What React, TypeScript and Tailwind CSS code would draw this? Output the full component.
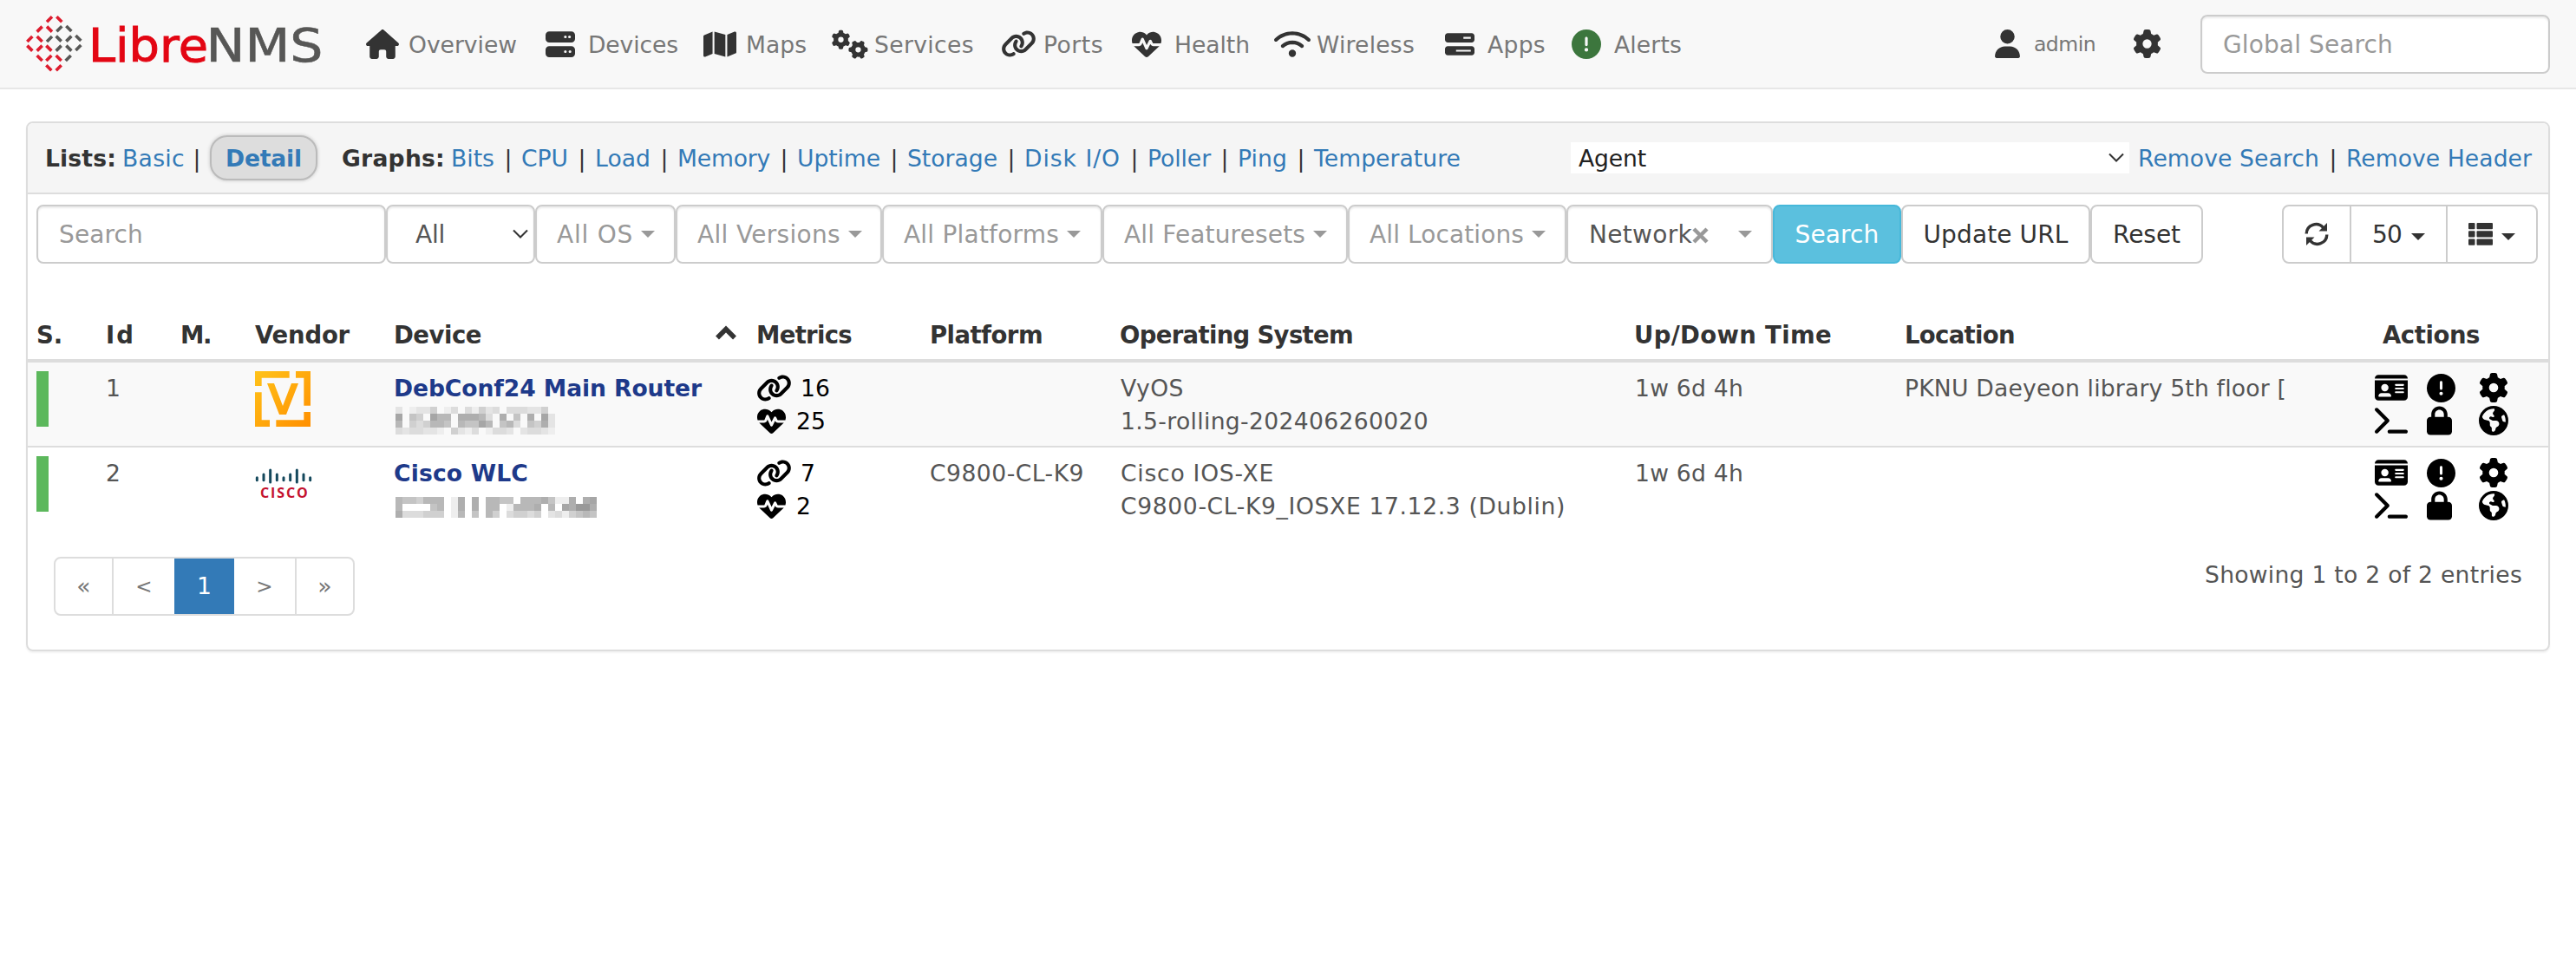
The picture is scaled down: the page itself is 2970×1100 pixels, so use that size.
import React, { useLayoutEffect, useRef } from "react";
import { FaHouse, FaServer, FaMap, FaGears, FaLink, FaHeartPulse, FaWifi, FaBarsProgress, FaCircleExclamation, FaUser, FaGear, FaIdCard, FaTerminal, FaLock, FaEarthAmericas } from "react-icons/fa6";

/* Text whose tracking is adjusted so that it spans a given width. */
function T({ w, className = "", children }: { w: number; className?: string; children: string }) {
  const ref = useRef<HTMLSpanElement>(null);
  useLayoutEffect(() => {
    const el = ref.current!;
    el.style.letterSpacing = "0px";
    const natural = el.getBoundingClientRect().width;
    el.style.letterSpacing = `${(w - natural) / children.length}px`;
  }, [w, children]);
  return <span ref={ref} className={"inline-block w-max justify-self-start whitespace-pre pt-[2px] " + className}>{children}</span>;
}

const DASHES: [number, number, number, string][] = [
  [111, 36, 1, "r"], [145, 36, 0, "r"],
  [77, 70, 1, "r"], [111, 70, 0, "r"], [145, 69, 1, "g"], [178, 68, 0, "g"],
  [43, 104, 1, "r"], [77, 104, 0, "r"], [111, 104, 1, "g"], [143, 103, 0, "g"], [178, 103, 1, "g"], [211, 101, 0, "g"],
  [43, 136, 0, "r"], [77, 136, 1, "r"], [109, 136, 0, "r"], [143, 136, 1, "g"], [178, 136, 0, "g"], [211, 134, 1, "g"],
  [77, 170, 0, "r"], [109, 170, 1, "r"], [143, 170, 0, "r"], [176, 170, 1, "g"],
  [109, 204, 0, "r"], [143, 204, 1, "r"],
];

function Logo() {
  return (
    <svg width="350" height="80" viewBox="0 0 350 80" className="block">
      {DASHES.map(([x, y, up, c], i) => {
        const cx = x / 3 - 10, cy = y / 3 - 0.7, d = 3, s = up ? 1 : -1;
        return <line key={i} x1={cx - d} y1={cy + d * s} x2={cx + d} y2={cy - d * s} stroke={c === "r" ? "#dd1c2e" : "#575756"} strokeWidth="3.6" />;
      })}
      <text x="72" y="59.5" fontFamily="DejaVu Sans" fontSize="53" fill="#e30613" stroke="#e30613" strokeWidth="0.9" textLength="138" lengthAdjust="spacingAndGlyphs">Libre</text>
      <text x="207.500" y="59.5" fontFamily="DejaVu Sans" fontSize="53" fill="#575756" stroke="#575756" strokeWidth="0.6" textLength="135" lengthAdjust="spacingAndGlyphs">NMS</text>
    </svg>
  );
}

function Caret({ className = "" }: { className?: string }) {
  return <span className={"inline-block border-x-8 border-t-8 border-x-transparent " + className} />;
}

const Chevron = () => (
  <svg width="18" height="12" viewBox="0 0 18 12" fill="none" stroke="#333" strokeWidth="2"><path d="M1 1.5l8 8 8-8" /></svg>
);

function NavItem({ icon, left, tw, children }: { icon: React.ReactNode; left: string; tw: number; children: string }) {
  return (
    <div className={"flex h-full shrink-0 items-center " + left}>
      <span className="flex w-[49px] shrink-0 text-[#333]">{icon}</span>
      <T w={tw} className="text-[#777]">{children}</T>
    </div>
  );
}

const Bar = ({ className = "ml-[11px]" }: { className?: string }) => <span className={"mr-[10px] w-[10px] pt-[2px] text-center " + className}>|</span>;

const BOX = "flex h-[68px] shrink-0 items-center rounded-lg border-2 border-[#ccc] bg-white ";
const INSET = "shadow-[inset_0_2px_2px_rgba(0,0,0,0.075)] ";

const GRAPHS: [string, number][] = [["Bits", 50], ["CPU", 54], ["Load", 64], ["Memory", 107], ["Uptime", 96], ["Storage", 104], ["Disk I/O", 111], ["Poller", 73], ["Ping", 57], ["Temperature", 169]];

const FILTERS: [string, string, number][] = [
  ["All OS", "w-[162px]", 88], ["All Versions", "w-[238px]", 165], ["All Platforms", "w-[254px]", 179], ["All Featuresets", "w-[283px]", 209], ["All Locations", "w-[252px]", 178],
];

const COLS = "grid grid-cols-[80px_86px_86px_160px_417px_200px_220px_593px_312px_542px_200px] pl-[10px] ";

function Refresh() {
  return (
    <svg width="28" height="28" viewBox="0 0 28 28" fill="none" stroke="#333" strokeWidth="3.4">
      <path d="M2.2 13.500A11 11 0 0 1 21.500 6.500" /><path d="M25.800 14.500A11 11 0 0 1 6.500 21.500" />
      <path d="M26 1v9.500H16.500z" fill="#333" stroke="none" /><path d="M2 27V17.500h9.500z" fill="#333" stroke="none" />
    </svg>
  );
}

function ListIcon() {
  return (
    <svg width="28" height="26" viewBox="0 0 28 26" fill="#333">
      {[0, 9.3, 18.6].map((y) => <g key={y}><rect x="0" y={y} width="7.5" height="7.2" rx="1" /><rect x="9.5" y={y} width="18.5" height="7.2" rx="1" /></g>)}
    </svg>
  );
}

function Vyos() {
  return (
    <svg width="64" height="64" viewBox="0 0 192 192" className="block">
      <defs><linearGradient id="vy" x1="0" y1="0" x2="1" y2="1"><stop offset="0" stopColor="#ffc31a" /><stop offset="1" stopColor="#ff8f00" /></linearGradient></defs>
      <path fill="url(#vy)" d="M0 0H119V23H23V51H0ZM141 0H192V119H169V23H141ZM0 73H23V169H51V192H0ZM169 141H192V192H73V169H169ZM42 42H66L96 120L126 42H150L108 150H84Z" />
    </svg>
  );
}

function Cisco() {
  const bars: [number, number, number][] = [[4, 28, 43], [27, 17, 43], [50, 2, 50], [73, 17, 43], [96, 28, 43], [119, 17, 43], [142, 2, 50], [165, 17, 43], [188, 28, 43]];
  return (
    <svg width="66" height="48" viewBox="-3 0 198 144" className="block overflow-visible">
      {bars.map(([x, a, b]) => <line key={x} x1={x} x2={x} y1={a + 4} y2={b - 2} stroke="#15495d" strokeWidth="9" strokeLinecap="round" />)}
      <text x="15" y="102" fontFamily="Open Sans" fontWeight="700" fontSize="48" fill="#c4122f" textLength="164" lengthAdjust="spacing">CISCO</text>
    </svg>
  );
}

/* Shades of the pixelated addresses: 0 is blank, 9 the darkest. */
const MASK_A = ["20122401303142303332240", "80540866077763070507082", "60434665065586056305472", "32332210421301332023321"];
const MASK_B = ["65546660170706655066675117078", "60000560170706601666706087997", "73334440160506403443402314565"];
const SHADE = ["bg-transparent", "bg-[#eee]", "bg-[#e4e4e4]", "bg-[#dcdcdc]", "bg-[#d0d0d0]", "bg-[#c4c4c4]", "bg-[#b8b8b8]", "bg-[#aeaeae]", "bg-[#a6a6a6]", "bg-[#999]"];
function Mask({ rows, className }: { rows: string[]; className: string }) {
  return (
    <div className={className}>
      {rows.map((r, i) => <div key={i} className="flex">{r.split("").map((c, j) => <span key={j} className={"size-2 shrink-0 " + SHADE[+c]} />)}</div>)}
    </div>
  );
}

type Row = { id: string; vendor: React.ReactNode; name: [string, number]; mask: React.ReactNode; ports: [string, number]; health: [string, number]; platform?: [string, number]; os: [string, number][]; loc?: [string, number] };
const ROWS: Row[] = [
  { id: "1", vendor: <Vyos />, name: ["DebConf24 Main Router", 355], mask: <Mask rows={MASK_A} className="mt-[3px] ml-[2px]" />, ports: ["16", 34], health: ["25", 34], os: [["VyOS", 73], ["1.5-rolling-202406260020", 355]], loc: ["PKNU Daeyeon library 5th floor [", 440] },
  { id: "2", vendor: <div className="pt-[14px]"><Cisco /></div>, name: ["Cisco WLC", 155], mask: <Mask rows={MASK_B} className="mt-[9px] ml-[2px]" />, ports: ["7", 17], health: ["2", 17], platform: ["C9800-CL-K9", 178], os: [["Cisco IOS-XE", 177], ["C9800-CL-K9_IOSXE 17.12.3 (Dublin)", 513]] },
];

function DeviceRow({ r, className }: { r: Row; className: string }) {
  return (
    <div className={COLS + "pt-[10px] text-[#555] leading-[36px] " + className}>
      <div className="h-16 w-[14px] bg-[#5cb85c]" />
      <div><T w={17}>{r.id}</T></div>
      <div />
      <div>{r.vendor}</div>
      <div className="flex h-[76px] flex-col items-start">
        <T w={r.name[1]} className="font-bold text-[#1e3a8a]">{r.name[0]}</T>
        {r.mask}
      </div>
      <div className="text-black">
        <div className="flex h-[38px] items-center gap-[10px] pl-px"><FaLink className="h-[33px] w-[41px]" /><T w={r.ports[1]}>{r.ports[0]}</T></div>
        <div className="flex h-[38px] items-center gap-[12px] pl-[2px]"><FaHeartPulse size={33} /><T w={r.health[1]}>{r.health[0]}</T></div>
      </div>
      <div className="pl-px">{r.platform && <T w={r.platform[1]}>{r.platform[0]}</T>}</div>
      <div className="flex flex-col items-start pl-px">{r.os.map(([t, w]) => <T key={t} w={w}>{t}</T>)}</div>
      <div className="pl-px"><T w={125}>1w 6d 4h</T></div>
      <div>{r.loc && <T w={r.loc[1]}>{r.loc[0]}</T>}</div>
      <div className="grid auto-rows-[38px] grid-cols-[60px_60px_60px] items-center text-black">
        <FaIdCard className="h-[34px] w-[38px]" /><FaCircleExclamation size={33} /><FaGear size={34} />
        <FaTerminal className="h-[34px] w-[38px]" /><FaLock className="h-[34px] w-[29px]" /><FaEarthAmericas size={34} />
      </div>
    </div>
  );
}

export default function App() {
  return (
    <div className="h-[1100px] w-[2970px] bg-white font-['DejaVu_Sans',sans-serif] text-[26.6px] text-[#333]">
      <nav className="flex h-[103px] items-center border-b-2 border-[#e7e7e7] bg-[#f8f8f8] pl-[30px]">
        <div className="w-[392px] shrink-0"><Logo /></div>
        <div className="flex h-full w-[1876px] items-center">
          <NavItem icon={<FaHouse size={38} />} left="w-[207px]" tw={125}>Overview</NavItem>
          <NavItem icon={<FaServer size={34} />} left="w-[182px]" tw={104}>Devices</NavItem>
          <NavItem icon={<FaMap size={38} />} left="w-[148px]" tw={70}>Maps</NavItem>
          <NavItem icon={<FaGears size={42} />} left="w-[195px]" tw={115}>Services</NavItem>
          <NavItem icon={<FaLink size={41} />} left="w-[151px]" tw={69}>Ports</NavItem>
          <NavItem icon={<FaHeartPulse size={34} />} left="w-[164px]" tw={87}>Health</NavItem>
          <NavItem icon={<FaWifi size={42} />} left="w-[197px]" tw={113}>Wireless</NavItem>
          <NavItem icon={<FaBarsProgress size={34} />} left="w-[146px]" tw={67}>Apps</NavItem>
          <NavItem icon={<FaCircleExclamation size={34} className="text-[#3c763d]" />} left="w-[300px]" tw={78}>Alerts</NavItem>
        </div>
        <FaUser size={33} className="w-[33px] shrink-0 text-[#333]" />
        <T w={71} className="ml-[14px] text-[23.5px] text-[#777]">admin</T>
        <FaGear size={33} className="ml-[43px] shrink-0 text-[#333]" />
        <div className={BOX + INSET + "ml-[45px] w-[403px] pl-[24px] text-[28px] text-[#999]"}><T w={196}>Global Search</T></div>
      </nav>

      <main className="mt-[37px] ml-[30px] h-[611px] w-[2910px] overflow-hidden rounded-lg border-2 border-[#ddd] shadow-[0_2px_2px_rgba(0,0,0,0.05)]">
        <div className="flex h-[82px] items-center border-b-2 border-[#ddd] bg-[#f5f5f5] pl-[20px]">
          <T w={82} className="font-bold">Lists:</T>
          <T w={72} className="ml-[7px] text-[#337ab7]">Basic</T>
          <Bar className="ml-[9px]" />
          <span className="flex h-[52px] w-[124px] items-center justify-center rounded-[20px] border-2 border-[#bbb] bg-[#ddd] shadow-[0_0_4px_rgba(0,0,0,0.2)]"><T w={88} className="font-bold text-[#337ab7]">Detail</T></span>
          <T w={119} className="ml-[28px] font-bold">Graphs:</T>
          <span className="w-[7px]" />
          {GRAPHS.map(([g, w], i) => <React.Fragment key={g}>{i > 0 && <Bar />}<T w={w} className="text-[#337ab7]">{g}</T></React.Fragment>)}
          <div className="ml-auto flex h-[36px] w-[644px] items-center justify-between bg-white pr-[6px] pl-[9px] text-[#222]"><T w={78}>Agent</T><Chevron /></div>
          <T w={209} className="ml-[10px] text-[#337ab7]">Remove Search</T>
          <Bar />
          <T w={214} className="mr-[19px] text-[#337ab7]">Remove Header</T>
        </div>

        <div className="mt-[12px] flex items-center pl-[10px] text-[28px] text-[#333]">
          <div className={BOX + INSET + "w-[403px] pl-[24px] text-[#999]"}><T w={97}>Search</T></div>
          <div className={BOX + INSET + "w-[172px] justify-between pr-[6px] pl-[32px] text-[#555]"}><T w={34}>All</T><Chevron /></div>
          {FILTERS.map(([t, w, tw]) => (
            <div key={t} className={BOX + INSET + "gap-[9px] pl-[23px] text-[#999] " + w}><T w={tw}>{t}</T><Caret className="border-t-[#999]" /></div>
          ))}
          <div className={BOX + INSET + "w-[238px] pl-[24px] text-[#555]"}><T w={119}>Network</T><svg width="19" height="19" viewBox="0 0 19 19" stroke="#999" strokeWidth="4.500" className="mt-[2px]"><path d="M2 2l15 15M17 2L2 17" /></svg><Caret className="ml-[34px] border-t-[#999]" /></div>
          <div className="flex h-[68px] w-[148px] shrink-0 items-center justify-center rounded-lg border-2 border-[#46b8da] bg-[#5bc0de] text-white"><T w={97}>Search</T></div>
          <div className={BOX + "w-[218px] justify-center"}><T w={167}>Update URL</T></div>
          <div className={BOX + "w-[130px] justify-center"}><T w={78}>Reset</T></div>
          <div className={BOX + "mr-[12px] ml-auto w-[295px]"}>
            <div className="flex h-full w-[78px] items-center justify-center border-r-2 border-[#ccc]"><Refresh /></div>
            <div className="flex h-full w-[111px] items-center justify-center gap-[11px] border-r-2 border-[#ccc]"><T w={34}>50</T><Caret className="mt-[5px] border-t-[#333]" /></div>
            <div className="flex h-full flex-1 items-center justify-center gap-[10px]"><ListIcon /><Caret className="mt-[5px] border-t-[#333]" /></div>
          </div>
        </div>

        <div className={COLS + "mt-[62px] h-[52px] border-b-4 border-[#ddd] text-[27.5px] font-bold leading-[36px]"}>
          <T w={30}>S.</T><T w={34}>Id</T><T w={35}>M.</T><T w={109}>Vendor</T>
          <div className="flex items-start justify-between pr-[22px]"><T w={101}>Device</T><svg width="24" height="17" viewBox="0 0 24 17" fill="none" stroke="#333" strokeWidth="5.5" className="mt-[9px]"><path d="M2 14.500l10-10 10 10" /></svg></div>
          <T w={110} className="ml-px">Metrics</T><T w={130} className="ml-px">Platform</T><T w={269}>Operating System</T><T w={228}>Up/Down Time</T><T w={127}>Location</T><T w={112} className="ml-[9px]">Actions</T>
        </div>
        <DeviceRow r={ROWS[0]} className="h-[98px] border-b-2 border-[#ddd] bg-[#f9f9f9] " />
        <DeviceRow r={ROWS[1]} className="h-[98px]" />

        <div className="mt-[28px] flex items-start justify-between pr-[30px] pl-[30px]">
          <div className="flex h-[68px] w-[347px] items-stretch overflow-hidden rounded-lg border-2 border-[#ddd] text-[#777]">
            <span className="flex w-[67px] items-center justify-center border-r-2 border-[#ddd]">«</span>
            <span className="flex w-[70px] items-center justify-center text-[23px]">&lt;</span>
            <span className="-my-[2px] flex w-[69px] items-center justify-center bg-[#337ab7] text-white">1</span>
            <span className="flex w-[72px] items-center justify-center border-r-2 border-[#ddd] text-[23px]">&gt;</span>
            <span className="flex flex-1 items-center justify-center">»</span>
          </div>
          <T w={366} className="text-[#555] leading-[38px]">Showing 1 to 2 of 2 entries</T>
        </div>
      </main>
    </div>
  );
}
